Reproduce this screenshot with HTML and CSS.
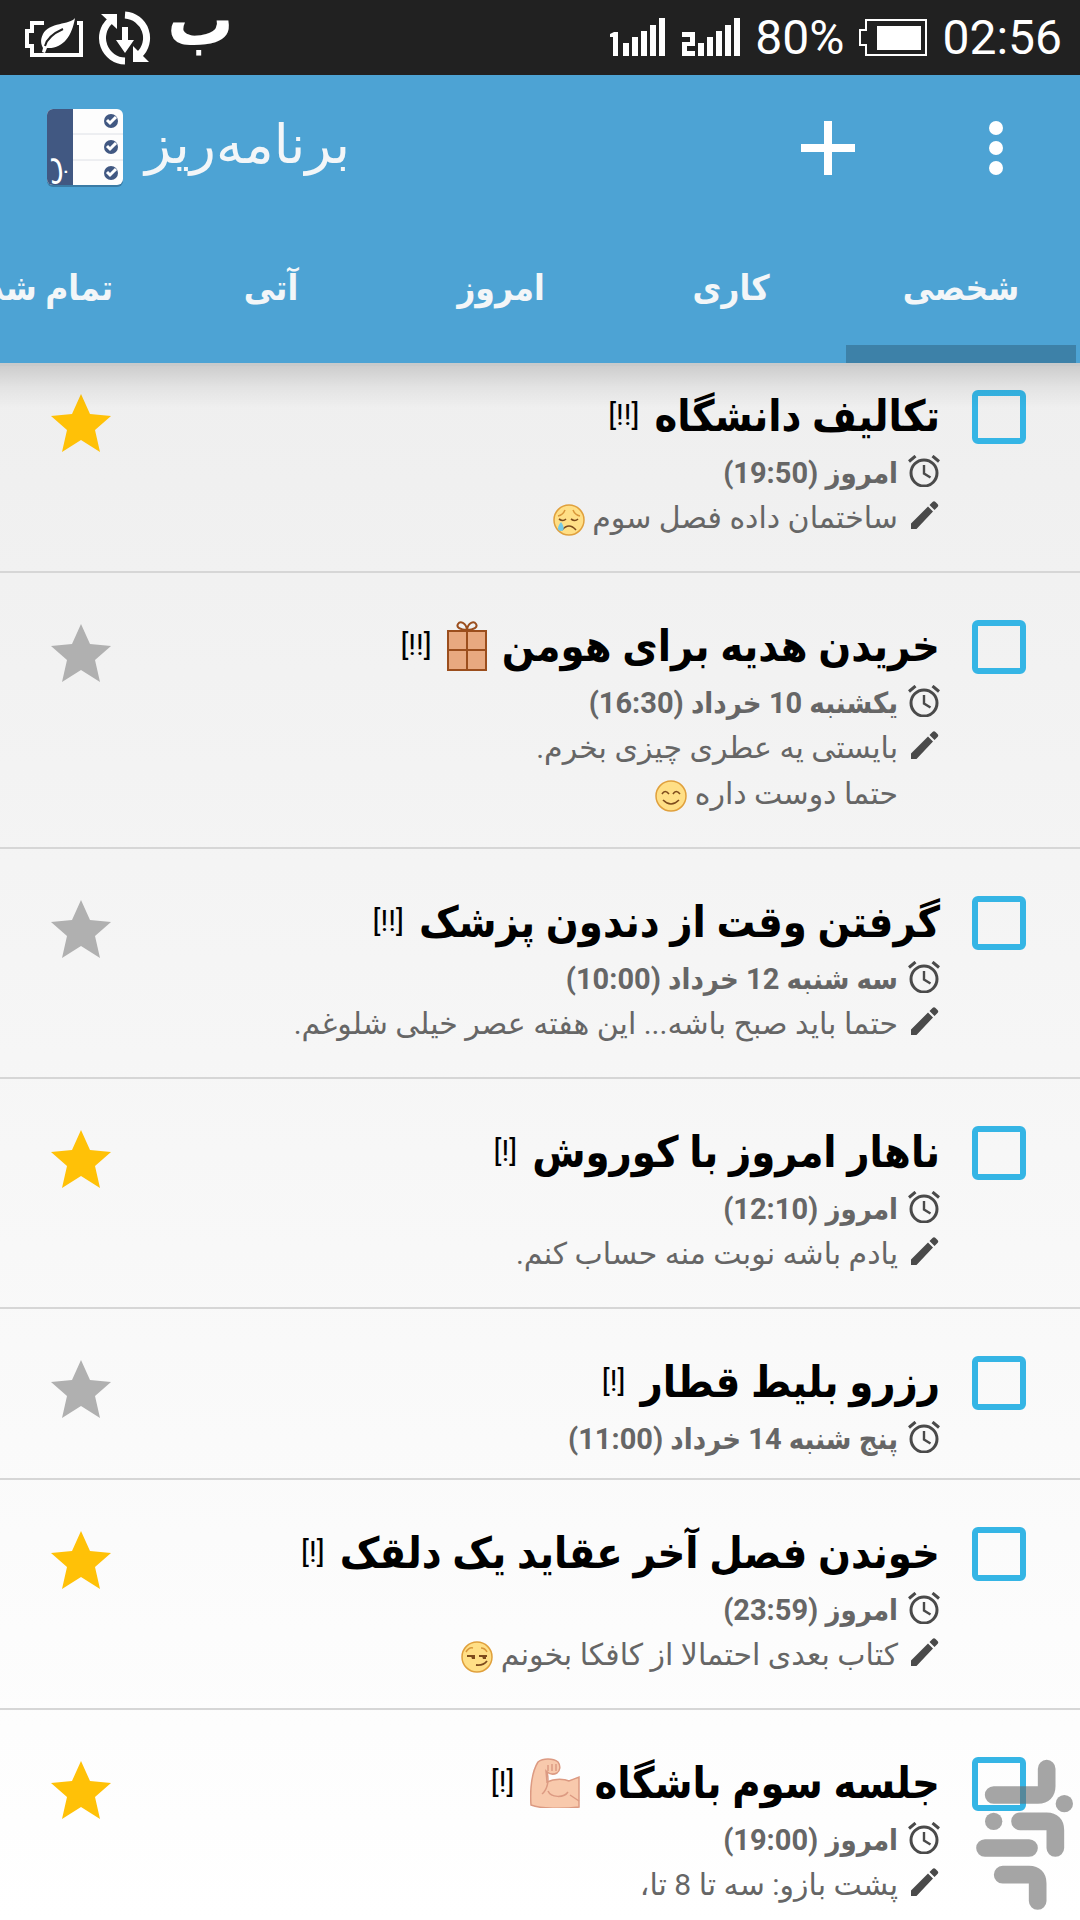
FILE: index.html
```html
<!DOCTYPE html>
<html lang="fa" dir="rtl">
<head>
    <meta charset="UTF-8">
    <meta name="viewport" content="width=device-width, initial-scale=1.0">
    <title>برنامه‌ریز</title>
    <link rel="stylesheet" href="styles.css">
</head>
<body>
    <!-- shared icons -->
    <svg class="sprite" aria-hidden="true">
        <symbol id="star" viewBox="0 0 60 58">
            <path d="M30 0l9 20 21 2-16 14 5 22-19-12-19 12 5-22L0 22l21-2z"/>
        </symbol>
        <symbol id="clock" viewBox="0 0 32 32">
            <circle cx="16" cy="18" r="13" fill="none" stroke="currentColor" stroke-width="3"/>
            <path d="M16 10v8.500l6.500 4" fill="none" stroke="currentColor" stroke-width="2.400"/>
            <path d="M1 6.500L7.500 1M31 6.500L24.500 1" stroke="currentColor" stroke-width="3"/>
        </symbol>
        <symbol id="pencil" viewBox="0 0 32 32">
            <path d="M3 24.500L20 7.500l5 5L8.500 30H3zM21.500 6l3-3c1-1 2-1 3 0l2 2c1 1 1 2 0 3l-3 3z"/>
        </symbol>
        <symbol id="face" viewBox="0 0 32 32">
            <circle cx="16" cy="16" r="15" fill="#ffdf86" stroke="#e0a03c" stroke-width="1.500"/>
        </symbol>
    </svg>

    <div class="app">
        <div class="status-bar" dir="ltr">
            <div class="status-group">
                <svg width="58" height="40" viewBox="0 0 58 40">
                    <path d="M19 5H7v8H2v15h5v9h49V5h-4" fill="none" stroke="#fff" stroke-width="4"/>
                    <path d="M50 0C45 7 24 4 18 16c-3 6-2 10 0 14l-1 4 3 1 2-5c16 1 25-12 28-30z" fill="#fff"/>
                    <path d="M20 28c2-8 9-13 18-17" fill="none" stroke="#212121" stroke-width="2"/>
                </svg>
                <svg width="54" height="54" viewBox="0 0 54 54">
                    <path d="M27 4a23 23 0 0 1 14 40M27 50A23 23 0 0 1 12 10" fill="none" stroke="#fff" stroke-width="7"/>
                    <path d="M3 3h16v15zM51 51H35V35zM24 16h6v13h6l-9 13-9-13h6z" fill="#fff"/>
                </svg>
                <span class="notice">ب</span>
            </div>
            <div class="status-group status-right">
                <svg width="58" height="40" viewBox="0 0 58 40" fill="#fff">
                    <path d="M1 16l4-2h4v24H4V19H1zM14 25h6v13h-6zM23 19h6v19h-6zM32 13h6v25h-6zM41 7h6v31h-6zM50 0h6v38h-6z"/>
                </svg>
                <svg width="58" height="40" viewBox="0 0 58 40" fill="#fff">
                    <path d="M0 14h13v14H5v5h8v5H0V24h8v-5H0zM16 25h6v13h-6zM25 19h6v19h-6zM34 13h6v25h-6zM43 7h6v31h-6zM52 0h6v38h-6z"/>
                </svg>
                <span>80%</span>
                <svg class="battery" width="68" height="38" viewBox="0 0 68 38">
                    <path d="M7 1h60v35H7V26H1V11h6z" fill="none" stroke="#fff" stroke-width="2"/>
                    <path d="M18 7h44v24H18z" fill="#fff"/>
                </svg>
                <span>02:56</span>
            </div>
        </div>

        <header class="header">
            <div class="toolbar" dir="ltr">
                <svg class="logo" width="76" height="78" viewBox="0 0 76 78">
                    <clipPath id="round"><rect width="76" height="76" rx="6"/></clipPath>
                    <rect y="2" width="76" height="76" rx="6" fill="#3a7ba5"/>
                    <g clip-path="url(#round)">
                        <rect width="76" height="76" fill="#fdfdfd"/>
                        <rect width="26" height="76" fill="#415882"/>
                        <path d="M26 25h50M26 51h50" stroke="#dde0e6" stroke-width="1"/>
                        <text class="logo-letter" transform="translate(15 77) rotate(-90)">ب</text>
                    </g>
                    <g fill="#415882">
                        <circle cx="64" cy="12" r="7"/><circle cx="64" cy="38" r="7"/><circle cx="64" cy="64" r="7"/>
                    </g>
                    <path d="M60 11l3 3 6-6M60 37l3 3 6-6M60 63l3 3 6-6" fill="none" stroke="#fff" stroke-width="3"/>
                </svg>
                <h1 class="app-title">برنامه‌ریز</h1>
                <button class="icon-button" aria-label="افزودن">
                    <svg width="54" height="54" viewBox="0 0 54 54"><path d="M27 0v54M0 27h54" stroke="#fff" stroke-width="8"/></svg>
                </button>
                <button class="icon-button" aria-label="گزینه‌ها">
                    <svg width="54" height="54" viewBox="0 0 54 54" fill="#fff"><circle cx="27" cy="7" r="7"/><circle cx="27" cy="27" r="7"/><circle cx="27" cy="47" r="7"/></svg>
                </button>
            </div>
            <nav class="tabs">
                <a href="#" class="tab active">شخصی</a>
                <a href="#" class="tab">کاری</a>
                <a href="#" class="tab">امروز</a>
                <a href="#" class="tab">آتی</a>
                <a href="#" class="tab">تمام شده</a>
            </nav>
        </header>

        <main class="list">
            <div class="task">
                <input type="checkbox" id="task1">
                <div class="task-body">
                    <label class="task-title" for="task1">تکالیف دانشگاه <span class="priority">[!!]</span></label>
                    <div class="due"><svg class="icon"><use href="#clock"/></svg><span>امروز (19:50)</span></div>
                    <div class="note"><svg class="icon"><use href="#pencil"/></svg>
                        <p>ساختمان داده فصل سوم
                            <svg class="emoji" viewBox="0 0 32 32"><use href="#face"/><path d="M5 12q5-1 7-6M20 6q2 5 7 6" fill="none" stroke="#d9973a" stroke-width="1.500"/><path d="M6 15q4 3 7 0M18 15q4 3 7 0M9 26q7-8 14 0" fill="none" stroke="#7d4b1c" stroke-width="1.600"/><path d="M8 18c-4 5-4 9 0 9s3-5 0-9z" fill="#76c9e6"/></svg>
                        </p>
                    </div>
                </div>
                <button class="star on" aria-label="ستاره"><svg><use href="#star"/></svg></button>
            </div>

            <div class="task">
                <input type="checkbox" id="task2">
                <div class="task-body">
                    <label class="task-title" for="task2">خریدن هدیه برای هومن
                        <svg width="40" height="50" viewBox="0 0 40 50"><path d="M1 10h38v39H1z" fill="#e8a980"/><path d="M1 10h38v39H1zM20 10v39M1 29h38" fill="none" stroke="#9b4e1d" stroke-width="2"/><path d="M20 9C13 9 9 6 11 3s8-2 9 6c1-8 7-9 9-6s-2 6-9 6z" fill="none" stroke="#9b4e1d" stroke-width="2"/></svg>
                        <span class="priority">[!!]</span></label>
                    <div class="due"><svg class="icon"><use href="#clock"/></svg><span>یکشنبه 10 خرداد (16:30)</span></div>
                    <div class="note"><svg class="icon"><use href="#pencil"/></svg>
                        <p>بایستی یه عطری چیزی بخرم.<br>حتما دوست داره
                            <svg class="emoji" viewBox="0 0 32 32"><use href="#face"/><path d="M7 14q3-5 7 0M18 14q3-5 7 0M8 20q8 8 16 0" fill="none" stroke="#7d4b1c" stroke-width="1.600"/></svg>
                        </p>
                    </div>
                </div>
                <button class="star" aria-label="ستاره"><svg><use href="#star"/></svg></button>
            </div>

            <div class="task">
                <input type="checkbox" id="task3">
                <div class="task-body">
                    <label class="task-title" for="task3">گرفتن وقت از دندون پزشک <span class="priority">[!!]</span></label>
                    <div class="due"><svg class="icon"><use href="#clock"/></svg><span>سه شنبه 12 خرداد (10:00)</span></div>
                    <div class="note"><svg class="icon"><use href="#pencil"/></svg>
                        <p>حتما باید صبح باشه... این هفته عصر خیلی شلوغم.</p>
                    </div>
                </div>
                <button class="star" aria-label="ستاره"><svg><use href="#star"/></svg></button>
            </div>

            <div class="task">
                <input type="checkbox" id="task4">
                <div class="task-body">
                    <label class="task-title" for="task4">ناهار امروز با کوروش <span class="priority">[!]</span></label>
                    <div class="due"><svg class="icon"><use href="#clock"/></svg><span>امروز (12:10)</span></div>
                    <div class="note"><svg class="icon"><use href="#pencil"/></svg>
                        <p>یادم باشه نوبت منه حساب کنم.</p>
                    </div>
                </div>
                <button class="star on" aria-label="ستاره"><svg><use href="#star"/></svg></button>
            </div>

            <div class="task">
                <input type="checkbox" id="task5">
                <div class="task-body">
                    <label class="task-title" for="task5">رزرو بلیط قطار <span class="priority">[!]</span></label>
                    <div class="due"><svg class="icon"><use href="#clock"/></svg><span>پنج شنبه 14 خرداد (11:00)</span></div>
                </div>
                <button class="star" aria-label="ستاره"><svg><use href="#star"/></svg></button>
            </div>

            <div class="task">
                <input type="checkbox" id="task6">
                <div class="task-body">
                    <label class="task-title" for="task6">خوندن فصل آخر عقاید یک دلقک <span class="priority">[!]</span></label>
                    <div class="due"><svg class="icon"><use href="#clock"/></svg><span>امروز (23:59)</span></div>
                    <div class="note"><svg class="icon"><use href="#pencil"/></svg>
                        <p>کتاب بعدی احتمالا از کافکا بخونم
                            <svg class="emoji" viewBox="0 0 32 32"><use href="#face"/><path d="M5 11q3-5 7-4M20 7q4 0 6 4" fill="none" stroke="#d9973a" stroke-width="1.500"/><path d="M6 15h8M18 15h8M15 24q7 1 11-4" fill="none" stroke="#7d4b1c" stroke-width="1.800"/><path d="M10 15h4v3h-3zM21 15h4v3h-3z" fill="#7d4b1c"/></svg>
                        </p>
                    </div>
                </div>
                <button class="star on" aria-label="ستاره"><svg><use href="#star"/></svg></button>
            </div>

            <div class="task">
                <input type="checkbox" id="task7">
                <div class="task-body">
                    <label class="task-title" for="task7">جلسه سوم باشگاه
                        <svg width="50" height="50" viewBox="0 0 50 50"><path d="M1 47C0 34 1 15 8 4c5-4 15-4 20 0 3 4 2 9-1 11-4 2-8 1-11-2l1 11c8-4 18-3 22-1l10-4v30C33 51 11 51 1 47z" fill="#f8c9ac" stroke="#dc9a82" stroke-width="1.500"/><path d="M17 14c2 8 1 17-5 22M18 33c3 7 16 7 20 1M40 37l9 6M18 7v6M22 6v7M26 6v7" fill="none" stroke="#dc9a82" stroke-width="1.500"/></svg>
                        <span class="priority">[!]</span></label>
                    <div class="due"><svg class="icon"><use href="#clock"/></svg><span>امروز (19:00)</span></div>
                    <div class="note"><svg class="icon"><use href="#pencil"/></svg>
                        <p>پشت بازو: سه تا 8 تا،</p>
                    </div>
                </div>
                <button class="star on" aria-label="ستاره"><svg><use href="#star"/></svg></button>
            </div>
        </main>

        <svg class="watermark" viewBox="165 117 297 456" aria-hidden="true">
            <g fill="none" stroke="#6b6b6b" stroke-width="53" stroke-linecap="round">
                <path d="M221 225h133q26 0 26-26v-53M300 304h80q26 0 26 26v54M195 384h132M248 464h79q26 0 26 26v53"/>
            </g>
            <g fill="#6b6b6b"><circle cx="433" cy="251" r="26"/><circle cx="221" cy="304" r="26"/></g>
        </svg>
    </div>
</body>
</html>
```
FILE: styles.css
```css
* {
    box-sizing: border-box;
}
body {
    margin: 0;
    font-family: Roboto, 'DejaVu Sans Condensed', 'DejaVu Sans', sans-serif;
    color: #000;
}
button {
    border: none;
    background: none;
    padding: 0;
    cursor: pointer;
}
svg {
    display: block;
    flex: none;
}
.sprite {
    position: absolute;
    width: 0;
    height: 0;
}
.app {
    position: relative;
    height: 100vh;
    overflow: hidden;
    display: flex;
    flex-direction: column;
    background: linear-gradient(#ebebeb, #ffffff);
}

/* status bar */
.status-bar {
    display: flex;
    justify-content: space-between;
    align-items: center;
    height: 75px;
    padding: 0 18px 0 25px;
    background-color: #212121;
    color: #fff;
    font-size: 48px;
}
.status-group {
    display: flex;
    align-items: center;
    gap: 15px;
}
.notice {
    padding-bottom: 35px;
    font-size: 74px;
    font-weight: bold;
    line-height: 40px;
}

/* header */
.header {
    position: relative;
    background-color: #4da3d4;
}
.header::after {
    content: '';
    position: absolute;
    top: 100%;
    left: 0;
    right: 0;
    height: 42px;
    border-top: 3px solid #c8cacb;
    background: linear-gradient(rgba(0, 0, 0, 0.14), rgba(0, 0, 0, 0.05) 50%, transparent);
    pointer-events: none;
}
.toolbar {
    display: flex;
    align-items: center;
    height: 144px;
    padding: 2px 57px 0 47px;
}
.app-title {
    flex: 1;
    margin: 0 0 0 22px;
    font-family: Roboto, 'DejaVu Sans', sans-serif;
    font-size: 54px;
    font-weight: normal;
    line-height: 60px;
    padding-bottom: 6px;
    color: #f3f6f8;
    text-align: left;
}
.logo-letter {
    font-family: 'DejaVu Sans', sans-serif;
    font-size: 32px;
    fill: #fff;
    direction: ltr;
}
.icon-button + .icon-button {
    margin-left: 114px;
}
.tabs {
    display: flex;
    overflow: hidden;
    padding-right: 4px;
}
.tab {
    flex: 0 0 230px;
    height: 144px;
    line-height: 140px;
    border-bottom: 18px solid transparent;
    text-align: center;
    text-decoration: none;
    font-size: 35px;
    font-weight: bold;
    color: #f3f6f8;
}
.tab.active {
    border-color: #3d81a8;
}

/* tasks */
.list {
    flex: 1;
    min-height: 0;
    overflow: hidden;
}
.task {
    display: flex;
    align-items: flex-start;
    padding: 45px 54px 17px 51px;
    border-bottom: 2px solid #d6d6d6;
}
.task:first-child {
    padding-top: 25px;
}
.task input {
    appearance: none;
    flex: none;
    width: 54px;
    height: 54px;
    margin: 2px 0 0 32px;
    border: 6px solid #35b5e5;
    border-radius: 6px;
}
.task-body {
    flex: 1;
    min-width: 0;
}
.task-title {
    display: flex;
    align-items: center;
    gap: 15px;
    height: 56px;
    margin-bottom: 7px;
    font-size: 43px;
    font-weight: bold;
    white-space: nowrap;
}
.priority {
    padding-bottom: 4px;
    font-size: 30px;
    font-weight: normal;
}
.due, .note {
    display: flex;
    gap: 10px;
    white-space: nowrap;
}
.due {
    line-height: 44px;
    font-size: 29px;
    font-weight: bold;
    color: #666;
}
.note {
    line-height: 46px;
    margin-bottom: 13px;
    font-family: Roboto, 'DejaVu Sans', sans-serif;
    font-size: 30px;
    color: #666;
}
.note p {
    margin: 0;
}
.icon {
    width: 32px;
    height: 32px;
    margin-top: 4px;
    color: #4a4a4a;
    fill: #4a4a4a;
}
.emoji {
    display: inline-block;
    width: 32px;
    height: 32px;
    vertical-align: middle;
}
.star {
    margin-top: 6px;
}
.star svg {
    width: 60px;
    height: 58px;
    fill: #b0b0b0;
}
.star.on svg {
    fill: #ffc107;
}
.watermark {
    position: absolute;
    right: 6px;
    bottom: 9px;
    width: 99px;
    height: 152px;
    opacity: 0.6;
}
```
